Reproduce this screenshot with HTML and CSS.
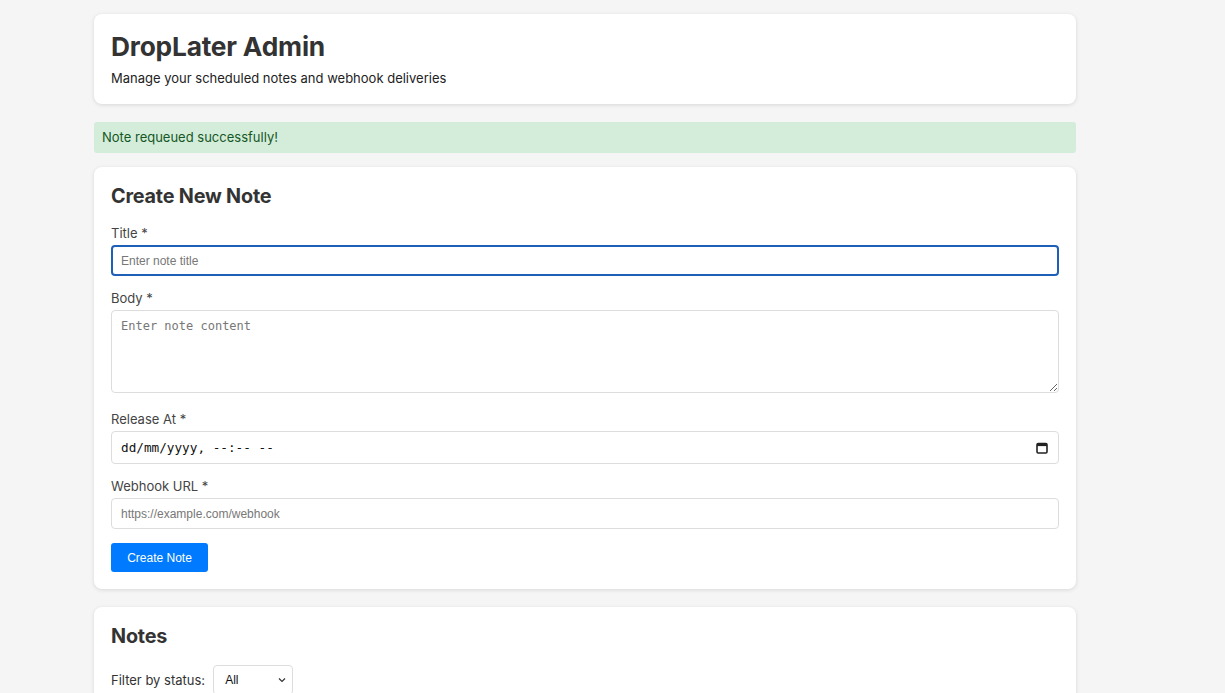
FILE: index.html
```html
<!DOCTYPE html>
<html lang="en">
<head>
<meta charset="utf-8">
<title>DropLater Admin</title>
<link rel="stylesheet" href="styles.css">
</head>
<body>
<div class="container">
  <header class="card header">
    <h1>DropLater Admin</h1>
    <p>Manage your scheduled notes and webhook deliveries</p>
  </header>

  <div class="alert">Note requeued successfully!</div>

  <section class="card">
    <h2>Create New Note</h2>
    <form class="form">
      <div class="group">
        <label class="label" for="title">Title *</label>
        <input id="title" class="input input-focus" type="text" placeholder="Enter note title">
      </div>
      <div class="group group-tall">
        <label class="label" for="body">Body *</label>
        <textarea id="body" class="input textarea" placeholder="Enter note content"></textarea>
      </div>
      <div class="group">
        <label class="label">Release At *</label>
        <div class="input datetime">
          <span class="dt-text">dd/mm/yyyy, --:-- --</span>
          <svg class="cal" width="12" height="12" viewBox="0 0 12 12" aria-hidden="true">
            <rect x="1" y="1.5" width="10" height="9.5" rx="1.2" fill="none" stroke="#222" stroke-width="1.6"/>
            <rect x="1" y="1.5" width="10" height="2.6" fill="#222"/>
          </svg>
        </div>
      </div>
      <div class="group">
        <label class="label" for="url">Webhook URL *</label>
        <input id="url" class="input" type="text" placeholder="https://example.com/webhook">
      </div>
      <div class="actions">
        <button type="button" class="btn">Create Note</button>
      </div>
    </form>
  </section>

  <section class="card">
    <h2>Notes</h2>
    <div class="filter">
      <span class="filter-label">Filter by status:</span>
      <div class="select">
        <span>All</span>
        <svg width="8" height="6" viewBox="0 0 8 6" aria-hidden="true"><path d="M1 1.5 L4 4.5 L7 1.5" fill="none" stroke="#333" stroke-width="1.2"/></svg>
      </div>
    </div>
  </section>
</div>
</body>
</html>
```

FILE: styles.css
```css
* { box-sizing: border-box; }

html, body {
  margin: 0;
  background: #f5f5f5;
  font-family: Inter, "Noto Sans", "Liberation Sans", sans-serif;
  color: #333;
}

.container {
  width: 982px;
  margin-left: 94px;
  padding-top: 14px;
}

.card {
  background: #fff;
  border-radius: 8px;
  box-shadow: 0 1px 4px rgba(0, 0, 0, 0.12);
  padding: 17px;
  margin-bottom: 18px;
}

.header h1 {
  margin: 0;
  font-size: 26.3px;
  line-height: 32px;
  font-weight: 700;
  color: #333;
  letter-spacing: -0.2px;
}

.header p {
  margin: 7px 0 0;
  font-size: 13px;
  line-height: 17px;
  color: #222;
}

.alert {
  background: #d4edda;
  color: #155724;
  font-size: 13px;
  line-height: 17px;
  padding: 7px 8px;
  border-radius: 3px;
  margin-bottom: 14px;
}

h2 {
  margin: 0;
  font-size: 19.8px;
  line-height: 24px;
  font-weight: 700;
  color: #333;
  letter-spacing: -0.2px;
}

.form {
  display: flex;
  flex-direction: column;
  gap: 13.5px;
  margin-top: 16.5px;
}

.group {
  display: flex;
  flex-direction: column;
  gap: 3.5px;
}

.group-tall {
  margin-bottom: 4px;
}

.label {
  font-size: 13px;
  line-height: 17px;
  color: #444;
}

.input {
  display: block;
  width: 100%;
  height: 31px;
  border: 1px solid #ddd;
  border-radius: 4px;
  padding: 0 9px;
  font-family: "Liberation Sans", Arial, sans-serif;
  font-size: 12px;
  color: #333;
  background: #fff;
  outline: none;
}

.input::placeholder {
  color: #777;
}

.input-focus {
  border: 2px solid #1e5fb8;
  padding: 0 8px;
}

.textarea {
  height: 83px;
  padding: 8px 9px;
  font-family: "DejaVu Sans Mono", "Liberation Mono", monospace;
  font-size: 12px;
  resize: vertical;
}

.datetime {
  height: 33px;
  display: flex;
  align-items: center;
  justify-content: space-between;
  padding: 0 10px 0 9px;
}

.dt-text {
  font-family: "DejaVu Sans Mono", "Liberation Mono", monospace;
  font-size: 12.7px;
  color: #111;
}

.actions {
  display: flex;
  padding-top: 0.5px;
}

.btn {
  background: #007bff;
  color: #fff;
  border: none;
  border-radius: 3px;
  height: 29px;
  width: 97px;
  font-family: "Liberation Sans", Arial, sans-serif;
  font-size: 12px;
  cursor: pointer;
}

.filter {
  display: flex;
  align-items: center;
  gap: 8px;
  margin-top: 17px;
}

.filter-label {
  font-size: 13px;
  color: #333;
}

.select {
  width: 80px;
  height: 30px;
  border: 1px solid #ddd;
  border-radius: 4px;
  display: flex;
  align-items: center;
  justify-content: space-between;
  padding: 0 6px 0 11px;
  font-family: "Liberation Sans", Arial, sans-serif;
  font-size: 12px;
  color: #111;
}
```
